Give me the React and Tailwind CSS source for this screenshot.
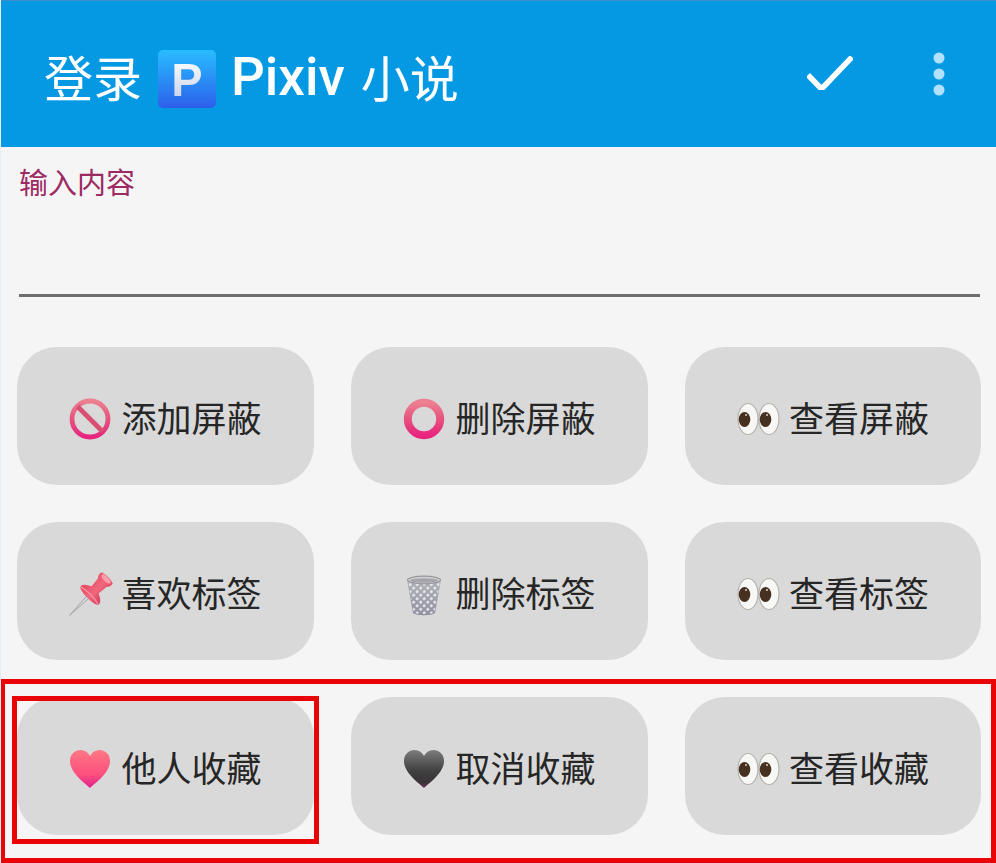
import { useId } from 'react';

const FONT = 'font-["Noto_Sans_CJK_SC","Liberation_Sans",sans-serif]';

function Emoji({ children, label }) {
  return (
    <svg width="42" height="42" viewBox="0 0 42 42" role="img" aria-label={label} className="shrink-0 mt-[6px] overflow-visible">
      {children}
    </svg>
  );
}

function PinkGradient({ id }) {
  return (
    <linearGradient id={id} x1="0" y1="0" x2="0" y2="1">
      <stop offset="0" stopColor="#ec7f90" />
      <stop offset="0.55" stopColor="#e64f7e" />
      <stop offset="1" stopColor="#e8247f" />
    </linearGradient>
  );
}

function ProhibitedIcon() {
  const id = useId();
  return (
    <Emoji label="禁止">
      <defs>
        <PinkGradient id={id} />
      </defs>
      <circle cx="21" cy="21" r="18" fill="none" stroke={`url(#${id})`} strokeWidth="4.8" />
      <line x1="8.5" y1="8.5" x2="33.5" y2="33.5" stroke="#d94f72" strokeWidth="4.8" />
    </Emoji>
  );
}

function CircleIcon() {
  const id = useId();
  return (
    <Emoji label="圆圈">
      <defs>
        <PinkGradient id={id} />
      </defs>
      <circle cx="21" cy="21" r="16.2" fill="none" stroke={`url(#${id})`} strokeWidth="8" />
    </Emoji>
  );
}

function EyesIcon() {
  return (
    <Emoji label="眼睛">
      <ellipse cx="11" cy="21" rx="10" ry="15.5" fill="#f7f7f5" stroke="#b5b2ae" strokeWidth="1.2" />
      <ellipse cx="32" cy="21" rx="10" ry="15.5" fill="#f7f7f5" stroke="#b5b2ae" strokeWidth="1.2" />
      <ellipse cx="7.5" cy="21.5" rx="5.8" ry="7.6" fill="#46301f" />
      <ellipse cx="28.5" cy="21.5" rx="5.8" ry="7.6" fill="#46301f" />
      <circle cx="9" cy="17" r="1" fill="#d8d0c8" />
      <circle cx="30" cy="17" r="1" fill="#d8d0c8" />
    </Emoji>
  );
}

function PinIcon() {
  const id = useId();
  return (
    <Emoji label="图钉">
      <defs>
        <linearGradient id={id} x1="0" y1="0" x2="1" y2="0">
          <stop offset="0" stopColor="#e94a63" />
          <stop offset="0.55" stopColor="#f0687c" />
          <stop offset="1" stopColor="#d93a5c" />
        </linearGradient>
      </defs>
      <g transform="translate(36 7) rotate(45)">
        <path d="M-1.6 24 L0 50 L1.6 24 Z" fill="#d6d6da" stroke="#9a9aa0" strokeWidth="0.8" />
        <path
          d="M-8 -3 Q0 -6 8 -3 Q9 1 6 4 L5 14 Q12 17 13 21 Q13 25 0 25 Q-13 25 -13 21 Q-12 17 -5 14 L-6 4 Q-9 1 -8 -3 Z"
          fill={`url(#${id})`}
        />
        <ellipse cx="0" cy="-1.5" rx="6" ry="2.4" fill="#f7a0ac" />
        <path d="M-12 22 Q0 19 12 22" fill="none" stroke="#f59aa6" strokeWidth="1.2" />
      </g>
    </Emoji>
  );
}

function TrashIcon() {
  const id = useId();
  const patternId = `${id}-dots`;
  return (
    <Emoji label="垃圾桶">
      <defs>
        <linearGradient id={id} x1="0" y1="0" x2="0" y2="1">
          <stop offset="0" stopColor="#b2b2b8" />
          <stop offset="1" stopColor="#8f8fa0" />
        </linearGradient>
        <pattern id={patternId} width="5" height="5" patternUnits="userSpaceOnUse" patternTransform="rotate(45)">
          <circle cx="2.5" cy="2.5" r="1.4" fill="#ececf0" />
        </pattern>
      </defs>
      <g transform="translate(0 1)">
        <path d="M4 6 L10 39 C13 42 29 42 32 39 L38 6 Z" fill={`url(#${id})`} />
        <path d="M5 8 L10.5 38 C14 41 28 41 31.5 38 L37 8 Z" fill={`url(#${patternId})`} />
        <ellipse cx="21" cy="6" rx="16.5" ry="3.8" fill="#d2d2d6" stroke="#96969c" strokeWidth="1.2" />
        <ellipse cx="21" cy="6.5" rx="14" ry="2.2" fill="#a4a4ac" />
      </g>
    </Emoji>
  );
}

const HEART = 'M21 39 C16 34 1 24 1 12 C1 5 6 1 11.5 1 C15.5 1 19 3 21 7 C23 3 26.5 1 30.5 1 C36 1 41 5 41 12 C41 24 26 34 21 39 Z';

function PinkHeartIcon() {
  const id = useId();
  return (
    <Emoji label="红心">
      <defs>
        <linearGradient id={id} x1="0" y1="0" x2="0" y2="1">
          <stop offset="0" stopColor="#ff7884" />
          <stop offset="0.65" stopColor="#fc4f7d" />
          <stop offset="1" stopColor="#e2208f" />
        </linearGradient>
      </defs>
      <path d={HEART} transform="translate(0 1)" fill={`url(#${id})`} />
    </Emoji>
  );
}

function BlackHeartIcon() {
  const id = useId();
  return (
    <Emoji label="黑心">
      <defs>
        <linearGradient id={id} x1="0" y1="0" x2="0" y2="1">
          <stop offset="0" stopColor="#7c7c7c" />
          <stop offset="0.55" stopColor="#404040" />
          <stop offset="0.85" stopColor="#383338" />
          <stop offset="1" stopColor="#6a2d63" />
        </linearGradient>
      </defs>
      <path d={HEART} transform="translate(0 1)" fill={`url(#${id})`} />
    </Emoji>
  );
}

const BUTTONS = [
  { icon: ProhibitedIcon, text: '添加屏蔽' },
  { icon: CircleIcon, text: '删除屏蔽' },
  { icon: EyesIcon, text: '查看屏蔽' },
  { icon: PinIcon, text: '喜欢标签' },
  { icon: TrashIcon, text: '删除标签' },
  { icon: EyesIcon, text: '查看标签' },
  { icon: PinkHeartIcon, text: '他人收藏' },
  { icon: BlackHeartIcon, text: '取消收藏' },
  { icon: EyesIcon, text: '查看收藏' },
];

function Header() {
  return (
    <header className="h-[147px] bg-[#0599e4] border-t border-[#3b8fc4] flex items-center pl-[43px] pr-[51px]">
      <h1 className="flex items-center text-white text-[49px] leading-none font-normal translate-y-[1px]">
        <span>登录</span>
        <span className="ml-[16px] mt-[8px] w-[58px] h-[58px] rounded-[5px] bg-gradient-to-b from-[#2bbcff] to-[#2e5eea] flex items-center justify-center">
          <span className='font-["Liberation_Sans",sans-serif] font-bold text-[47px] leading-none bg-gradient-to-b from-white to-[#c4cfe6] bg-clip-text text-transparent'>
            P
          </span>
        </span>
        <span className='ml-[15px] mt-[4px] font-["Roboto",sans-serif] font-medium text-[53px]'>Pixiv</span>
        <span className="ml-[16px]">小说</span>
      </h1>
      <div className="ml-auto flex items-center gap-[80px]">
        <svg width="46" height="34" viewBox="0 0 46 34" fill="none" aria-label="确认" className="mb-[2px]">
          <path d="M1 19 L14.5 33 L45 1" stroke="white" strokeWidth="5.5" />
        </svg>
        <svg width="12" height="44" viewBox="0 0 12 44" aria-label="更多" className="mb-[1px]">
          <circle cx="6" cy="6" r="5.5" fill="#b0e2ff" />
          <circle cx="6" cy="22" r="5.5" fill="#b0e2ff" />
          <circle cx="6" cy="38" r="5.5" fill="#b0e2ff" />
        </svg>
      </div>
    </header>
  );
}

export default function App() {
  return (
    <div className={`relative w-[996px] h-[863px] overflow-hidden bg-[#f5f5f5] border-l border-[#e4eef4] ${FONT}`}>
      <Header />

      <div className="pl-[18px] pr-[16px] pt-[18px]">
        <label className="block text-[29px] leading-[32px] text-[#9c2a63]">输入内容</label>
        <div className="mt-[97px] h-[3px] bg-[#6e6e6e]" />
      </div>

      <div className="grid grid-cols-[297px_297px_296px] gap-x-[37px] gap-y-[37px] pl-[16px] pt-[50px]">
        {BUTTONS.map(({ icon: Icon, text }, index) => (
          <button
            key={index}
            className="h-[138px] rounded-[40px] bg-[#d9d9d9] flex items-center justify-center gap-[10px] text-[35px] leading-none text-[#262626]"
          >
            <Icon />
            <span>{text}</span>
          </button>
        ))}
      </div>

      {/* Red annotation boxes drawn over the screenshot */}
      <div className="absolute left-[-1px] top-[679px] w-[996px] h-[184px] border-[5px] border-[#e90505] pointer-events-none" />
      <div className="absolute left-[11px] top-[696px] w-[307px] h-[148px] border-[5px] border-[#e90505] pointer-events-none" />
    </div>
  );
}
